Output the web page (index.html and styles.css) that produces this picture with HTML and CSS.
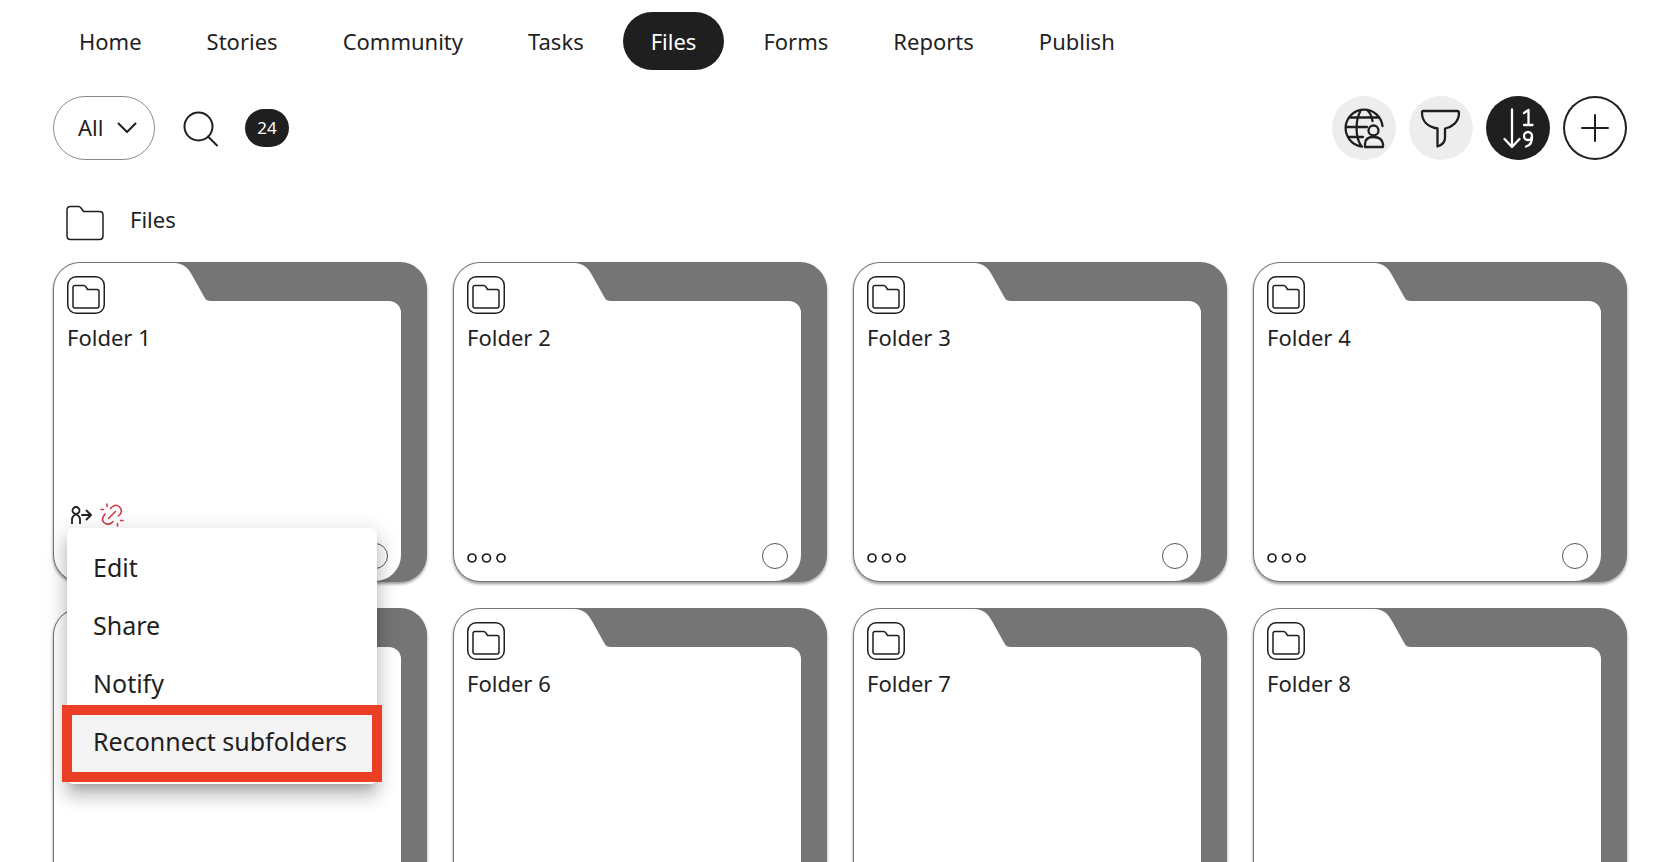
FILE: index.html
```html
<!DOCTYPE html>
<html lang="en">
<head>
<meta charset="utf-8">
<title>Files</title>
<link rel="stylesheet" href="styles.css">
</head>
<body>
<svg class="defs" aria-hidden="true">
  <symbol id="folder" viewBox="0 0 38 36"><path d="M1 5Q1 1.500 4.500 1.500H12.500Q14 1.500 15 3L17.500 6.500H33.500Q37 6.500 37 10V31Q37 34.500 33.500 34.500H4.500Q1 34.500 1 31Z"/></symbol>
  <symbol id="folder-box" viewBox="0 0 38 38"><rect x="0.750" y="0.750" width="36.500" height="36.500" rx="8.500"/><path d="M6 11.500Q6 9.500 8 9.500H16.500Q18 9.500 19 11L20.500 13.500H30Q32 13.500 32 15.500V30Q32 32 30 32H8Q6 32 6 30Z"/></symbol>
  <symbol id="tab" viewBox="0 0 160 39"><path d="M0 39V26A26 26 0 0 1 26 0H120C129 0 134.500 5 138.500 13L150.500 34.500Q152 38 157 38H160V39Z"/></symbol>
  <symbol id="more" viewBox="0 0 39 10"><circle cx="5" cy="5" r="4"/><circle cx="19.500" cy="5" r="4"/><circle cx="34" cy="5" r="4"/></symbol>
</svg>

<nav class="nav">
  <a href="#">Home</a>
  <a href="#">Stories</a>
  <a href="#">Community</a>
  <a href="#">Tasks</a>
  <a href="#" class="active" aria-current="page">Files</a>
  <a href="#">Forms</a>
  <a href="#">Reports</a>
  <a href="#">Publish</a>
</nav>

<main class="page">
  <div class="toolbar">
    <div class="filter">
      <select aria-label="Show"><option>All</option></select>
      <svg class="chevron icon" viewBox="0 0 20 12"><path d="M1.500 1.500 10 10 18.500 1.500"/></svg>
    </div>
    <button class="search" aria-label="Search"><svg class="icon" viewBox="0 0 36 38"><circle cx="15.500" cy="17.500" r="14"/><path d="M25 27.500 34 36.500"/></svg></button>
    <span class="count">24</span>
    <div class="actions">
      <button class="round" aria-label="Visibility"><svg class="icon" viewBox="0 0 64 64"><path d="M30 50.500A18.500 18.500 0 1 1 50.500 30M29 14C23 24 23 41 29.500 50.500M35 14Q39.500 18 40.500 25M17 21.500H47M14 31H35M17 41H31"/><circle cx="41.500" cy="34.500" r="5"/><path d="M33 51V48Q33 41 41.500 41T51 48V51Z"/></svg></button>
      <button class="round" aria-label="Filter"><svg class="icon" viewBox="0 0 64 64"><path d="M14 15H48Q50 15 50 17C50 26 43 31 36 32.500V42Q36 48 28.500 50.500V32.500C20 31 13 26 13 17Q13 15 14 15Z"/></svg></button>
      <button class="round dark" aria-label="Sort"><svg class="icon" viewBox="0 0 64 64"><path d="M26 13.500V50.500M18.500 43 26 51 33.500 43M38 17 42.500 14V29M38 29H46.500"/><circle cx="42" cy="40" r="4"/><path d="M46 40Q46.500 49 40 50.500"/></svg></button>
      <button class="round outline" aria-label="Add"><svg class="icon" viewBox="0 0 64 64"><path d="M32 19V45M19 32H45"/></svg></button>
    </div>
  </div>

  <h1 class="crumb"><svg class="icon"><use href="#folder"/></svg>Files</h1>

  <ul class="grid">
    <li class="folder">
      <svg class="tab"><use href="#tab"/></svg>
      <div class="body">
        <svg class="icon type"><use href="#folder-box"/></svg>
        <h2>Folder 1</h2>
        <div class="status">
          <svg class="icon share" viewBox="0 0 21 18"><circle cx="5" cy="4.500" r="3.500"/><path d="M1 17.500V13Q1 10.500 5 8Q9 10.500 9 13V17.500M11 9H20M15.500 4.500 20 9 15.500 13.500"/></svg>
          <svg class="icon broken" viewBox="0 0 24 24"><path d="M8.500 15.500 15.500 8.500M10.500 5.500 12 4Q16 .5 19.500 4T20 11.500L18.500 13M5 11 4 12.500Q1 16.500 4 19.500T11.500 20L13 18.500M7 1V3.500M1 6.500H3.500M17.500 20.500V23M20.500 17.500H23"/></svg>
        </div>
        <div class="foot">
          <button class="more" aria-label="More"><svg class="icon"><use href="#more"/></svg></button>
          <input type="checkbox" aria-label="Select Folder 1">
        </div>
      </div>
      <div class="menu" role="menu">
        <button role="menuitem">Edit</button>
        <button role="menuitem">Share</button>
        <button role="menuitem">Notify</button>
        <button role="menuitem" class="marked">Reconnect subfolders</button>
      </div>
    </li>
    <li class="folder"><svg class="tab"><use href="#tab"/></svg><div class="body"><svg class="icon type"><use href="#folder-box"/></svg><h2>Folder 2</h2><div class="foot"><button class="more" aria-label="More"><svg class="icon"><use href="#more"/></svg></button><input type="checkbox" aria-label="Select Folder 2"></div></div></li>
    <li class="folder"><svg class="tab"><use href="#tab"/></svg><div class="body"><svg class="icon type"><use href="#folder-box"/></svg><h2>Folder 3</h2><div class="foot"><button class="more" aria-label="More"><svg class="icon"><use href="#more"/></svg></button><input type="checkbox" aria-label="Select Folder 3"></div></div></li>
    <li class="folder"><svg class="tab"><use href="#tab"/></svg><div class="body"><svg class="icon type"><use href="#folder-box"/></svg><h2>Folder 4</h2><div class="foot"><button class="more" aria-label="More"><svg class="icon"><use href="#more"/></svg></button><input type="checkbox" aria-label="Select Folder 4"></div></div></li>
    <li class="folder"><svg class="tab"><use href="#tab"/></svg><div class="body"><svg class="icon type"><use href="#folder-box"/></svg><div class="foot"><button class="more" aria-label="More"><svg class="icon"><use href="#more"/></svg></button><input type="checkbox" aria-label="Select folder"></div></div></li>
    <li class="folder"><svg class="tab"><use href="#tab"/></svg><div class="body"><svg class="icon type"><use href="#folder-box"/></svg><h2>Folder 6</h2><div class="foot"><button class="more" aria-label="More"><svg class="icon"><use href="#more"/></svg></button><input type="checkbox" aria-label="Select Folder 6"></div></div></li>
    <li class="folder"><svg class="tab"><use href="#tab"/></svg><div class="body"><svg class="icon type"><use href="#folder-box"/></svg><h2>Folder 7</h2><div class="foot"><button class="more" aria-label="More"><svg class="icon"><use href="#more"/></svg></button><input type="checkbox" aria-label="Select Folder 7"></div></div></li>
    <li class="folder"><svg class="tab"><use href="#tab"/></svg><div class="body"><svg class="icon type"><use href="#folder-box"/></svg><h2>Folder 8</h2><div class="foot"><button class="more" aria-label="More"><svg class="icon"><use href="#more"/></svg></button><input type="checkbox" aria-label="Select Folder 8"></div></div></li>
  </ul>
</main>
</body>
</html>
```

FILE: styles.css
```css
* { box-sizing: border-box; }
html { scrollbar-width: none; }
body {
  margin: 0;
  background: #fff;
  color: #1f1f1f;
  font: 22px/30px "Noto Sans", "Open Sans", sans-serif;
}
button, select { font: inherit; color: inherit; background: none; border: 0; padding: 0; margin: 0; }
h1, h2 { margin: 0; font: inherit; }
.defs { display: none; }
.icon { display: block; fill: none; stroke: #1f1f1f; stroke-width: 2; stroke-linecap: round; stroke-linejoin: round; }

.nav { display: flex; gap: 9px; padding: 12px 51px 0; }
.nav a { padding: 14px 28px; border-radius: 29px; color: inherit; text-decoration: none; }
.nav .active { margin: 0 2px; background: #1f1f1f; color: #fff; }

.page { padding: 26px 43px 0 53px; }
.toolbar { display: flex; align-items: center; }
.filter { position: relative; }
.filter select {
  display: block;
  width: 102px;
  height: 64px;
  padding: 0 24px 2px;
  appearance: none;
  border: 1px solid #8a8a8a;
  border-radius: 32px;
}
.chevron { position: absolute; right: 18px; top: 26px; width: 20px; height: 12px; pointer-events: none; }
.search { margin-left: 28px; }
.search svg { width: 36px; height: 38px; }
.count {
  margin-left: 26px;
  width: 44px;
  border-radius: 19px;
  background: #1f1f1f;
  color: #fff;
  font-size: 17px;
  line-height: 38px;
  text-align: center;
}
.actions { display: flex; gap: 13px; margin-left: auto; }
.round { width: 64px; height: 64px; border-radius: 50%; background: #ededed; }
.round svg { width: 64px; height: 64px; }
.round:not(.outline) svg { stroke-width: 2.3; }
.dark { background: #1f1f1f; }
.dark svg { stroke: #fff; }
.outline { background: #fff; box-shadow: inset 0 0 0 2px #1f1f1f; }

.crumb { display: flex; gap: 26px; margin-top: 44px; padding-left: 13px; height: 58px; }
.crumb svg { width: 38px; height: 38px; stroke-width: 1.5; }

.grid {
  display: grid;
  grid-template-columns: repeat(4, 1fr);
  gap: 26px;
  margin: 0;
  padding: 0;
  list-style: none;
}
.folder {
  position: relative;
  padding: 39px 26px 1px 1px;
  border-radius: 27px;
  background: #757575;
  box-shadow: 0 2px 3px rgba(0, 0, 0, .4);
}
.tab { position: absolute; left: 1px; top: 1px; width: 160px; height: 39px; fill: #fff; }
.body {
  position: relative;
  display: flex;
  flex-direction: column;
  height: 280px;
  padding: 0 13px 12px;
  border-radius: 0 12px 26px 26px;
  background: #fff;
}
.type { width: 38px; height: 38px; margin: -25px 0 8px; flex: none; stroke-width: 1.5; }
.status { display: flex; align-items: center; gap: 8px; margin: auto 0 16px 4px; }
.share { width: 21px; height: 18px; stroke-width: 1.8; }
.broken { width: 24px; height: 24px; stroke: #d03a4b; stroke-width: 1.6; }
.foot { display: flex; justify-content: space-between; align-items: center; margin-top: auto; }
.status + .foot { margin-top: 0; }
.more { padding-top: 4px; }
.more svg { width: 39px; height: 10px; stroke-width: 1.7; }
.foot input {
  appearance: none;
  width: 26px;
  height: 26px;
  margin: 0;
  border: 1px solid #555;
  border-radius: 50%;
}

.menu {
  position: absolute;
  z-index: 2;
  left: 14px;
  top: 266px;
  display: flex;
  flex-direction: column;
  min-width: 310px;
  padding: 12px 0;
  border-radius: 6px;
  background: #fff;
  box-shadow: 0 8px 8px -5px rgba(0, 0, 0, .2), 0 13px 16px 2px rgba(0, 0, 0, .14), 0 5px 22px 3px rgba(0, 0, 0, .12);
}
.menu button { position: relative; padding: 9px 26px 13px; font-size: 25px; line-height: 36px; text-align: left; white-space: nowrap; }
.menu .marked { background: #f4f4f4; }
.marked::after { content: ""; position: absolute; inset: -9px -5px -10px; border: 10px solid #eb3f25; }
```
